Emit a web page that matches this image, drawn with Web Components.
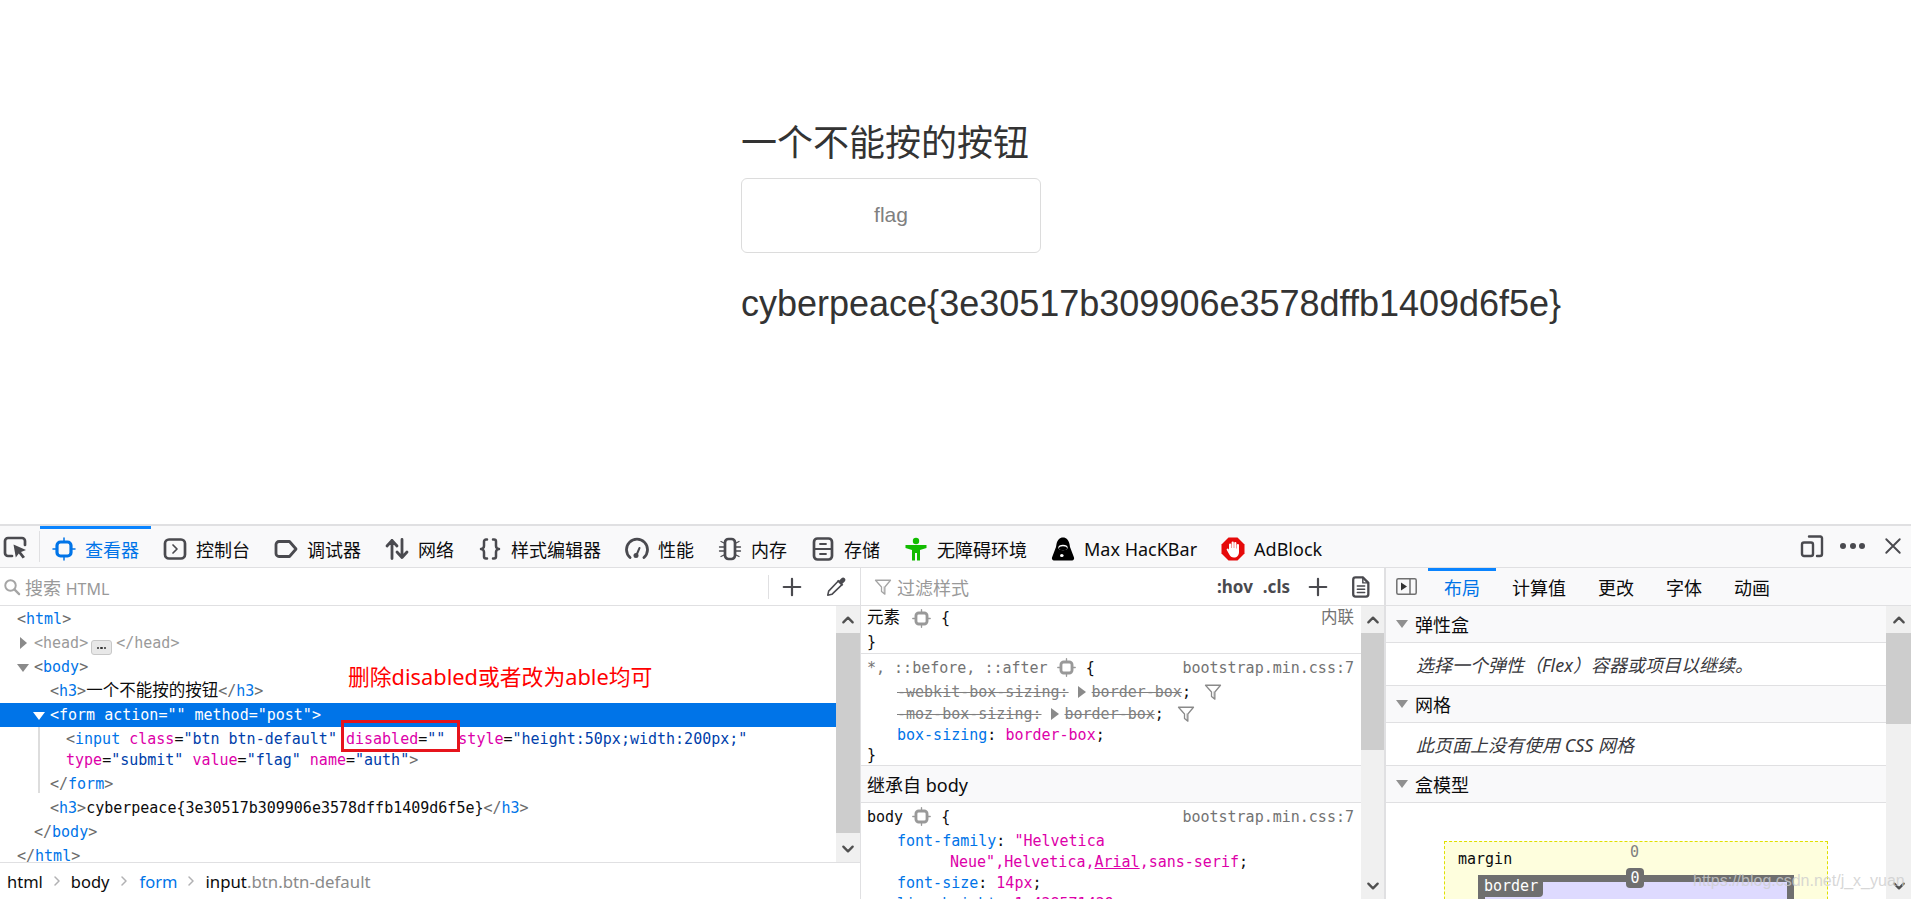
<!DOCTYPE html>
<html lang="zh">
<head>
<meta charset="utf-8">
<title>一个不能按的按钮</title>
<style>
  html, body { margin: 0; height: 100%; overflow: hidden; background: #fff; }
  body { font-family: "Noto Sans", "Noto Sans CJK SC", sans-serif; }
</style>
</head>
<body>
<app-root></app-root>

<script>
// shared icon strings, all on a 24 box and drawn with currentColor
const svg = (body, size = 24, extra = '') =>
  `<svg width="${size}" height="${size}" viewBox="0 0 24 24" fill="none" stroke="currentColor" stroke-linecap="round" stroke-linejoin="round" ${extra}>${body}</svg>`;

const ICONS = {
  pick: svg('<path stroke-width="2.7" d="M9 21H5a3 3 0 0 1-3-3V6a3 3 0 0 1 3-3h14a3 3 0 0 1 3 3v4"/><path fill="currentColor" stroke="none" d="M10.5 9.5 23 15l-5 2 4 5-2.4 1.6-3.8-5.2-3 4.2z"/>'),
  inspector: svg('<rect x="5" y="5" width="14" height="14" rx="3.5" stroke-width="3.2"/><path stroke-width="1.5" d="M12 1v3M12 20v3M1 12h3M20 12h3"/>'),
  console: svg('<rect x="2" y="2.5" width="20" height="19" rx="4" stroke-width="2.7"/><path stroke-width="1.7" d="m10 8 4 4-4 4"/>'),
  debugger: svg('<path stroke-width="2.8" d="M5 4.5h10.5L22 12l-6.5 7.5H5a3 3 0 0 1-3-3v-9a3 3 0 0 1 3-3z"/>'),
  network: svg('<path stroke-width="2.8" d="M7 21.5V3.5M2 9l5-5.5L12 9M17 2.5v18M12 15l5 5.5 5-5.5"/>'),
  style: svg('<path stroke-width="2.5" d="M9 2.5H8a2 2 0 0 0-2 2V9a3 3 0 0 1-3 3 3 3 0 0 1 3 3v4.500a2 2 0 0 0 2 2h1M15 2.5h1a2 2 0 0 1 2 2V9a3 3 0 0 0 3 3 3 3 0 0 0-3 3v4.500a2 2 0 0 1-2 2h-1"/>'),
  perf: svg('<path stroke-width="2.8" d="M5 20.5a10.5 10.5 0 1 1 14 0"/><circle cx="11" cy="18.5" r="2.5" fill="currentColor" stroke="none"/><path stroke-width="2" d="m11.5 18 3-7"/>'),
  memory: svg('<rect x="7" y="2" width="10" height="20" rx="3.5" stroke-width="2.7"/><path stroke-width="1.3" d="M6 6 3 4.500M6 10H1.500M6 14H1.500M6 18l-3 1.500M18 6l3-1.500M18 10h4.500M18 14h4.500M18 18l3 1.500"/>'),
  storage: svg('<rect x="3" y="1.5" width="18" height="21" rx="3.5" stroke-width="2.7"/><path stroke-width="1.8" d="M3 12h18M9 7h6M9 17h6"/>'),
  access: svg('<circle cx="12" cy="4" r="3.2" fill="#12bc00" stroke="none"/><path fill="#12bc00" stroke="none" d="M1.5 8h21v3l-6.500 2v10.500h-3V16h-2v7.500H8V13l-6.500-2z"/>'),
  hackbar: svg('<path fill="#000" stroke="none" d="M12 .5c3.500 0 5.500 2.500 6.500 6.500l.5 3 4 10.500c.5 1.500-.5 3-2 3H3c-1.500 0-2.500-1.500-2-3L5 10l.5-3C6.500 3 8.500.5 12 .5z"/><ellipse cx="12" cy="10.500" rx="4.600" ry="2.700" fill="#fff" stroke="none"/><ellipse cx="12" cy="11.300" rx="4" ry="2" fill="#000" stroke="none"/><ellipse cx="10.800" cy="18.500" rx="1.800" ry="1.500" fill="#fff" stroke="none"/>'),
  adblock: svg('<path fill="#e60a0a" stroke="none" d="M7.500.5h9l7 7v9l-7 7h-9l-7-7v-9z"/><path fill="#fff" stroke="none" d="M8 7.500a1.100 1.100 0 0 1 2.200 0V11h.4V5.500a1.100 1.100 0 0 1 2.200 0V11h.4V6a1.100 1.100 0 0 1 2.200 0v5.500h.4V8a1.100 1.100 0 0 1 2.200 0v7c0 3.500-2 5.500-5 5.500-2.500 0-3.700-1-4.700-3l-2.500-4.500c-.6-1.200 1.100-2.200 1.900-1L8 14z"/>'),
  device: svg('<path stroke-width="2.4" d="M9 2.500h11.500a2 2 0 0 1 1.500 1.500v16a2 2 0 0 1-2 2H17"/><rect x="2" y="8.500" width="11" height="13.500" rx="2" stroke-width="2.4"/>'),
  plus: svg('<path stroke-width="2.4" d="M12 3v18M3 12h18"/>', 22),
  dropper: svg('<path stroke-width="1.7" d="m14 6-10 10.500L3 21l4.500-1L18 10"/><path fill="currentColor" stroke="none" d="M13 5.500 14.500 4l1 1L18 2.500c1-1 2.500-1 3.500 0s1 2.500 0 3.500L19 8.500l1 1-1.500 1.500z"/>', 22),
  doc: svg('<path stroke-width="2.5" d="M6 1.500h8l6 6V20a2.500 2.500 0 0 1-2.500 2.500H6A2.500 2.500 0 0 1 3.500 20V4A2.500 2.500 0 0 1 6 1.500z"/><path stroke-width="1.6" d="M14 1.500V7.500h6M8 11h8M8 14.500h8M8 18h8"/>', 22),
  search: svg('<circle cx="10" cy="10" r="7" stroke-width="2.6"/><path stroke-width="3" d="m15.500 15.500 6 6"/>', 18),
  filter: svg('<path stroke-width="1.7" d="M2 3h20l-7.500 9v9.500L10 18v-6z"/><path fill="currentColor" fill-opacity=".35" stroke="none" d="M14.500 12v9.500L12 19v-8z"/>', 18),
  node: svg('<rect x="5" y="5" width="14" height="14" rx="3.5" stroke-width="3.6"/><path stroke-width="1.7" d="M12 1v3M12 20v3M1 12h3M20 12h3"/>', 19)
};

// page above the toolbox: the challenge page itself
class ChallengePage extends HTMLElement {
  constructor() {
    super();
    this.attachShadow({ mode: 'open' });
    this.shadowRoot.innerHTML = `
      <style>
        :host { display: block; flex: 1; padding: 124px 0 0 741px; color: #333;
          font-family: "Liberation Sans", "Noto Sans CJK SC", sans-serif; }
        h3 { margin: 0; font-size: 36px; font-weight: 400; line-height: 40px; }
        .btn { display: flex; align-items: center; justify-content: center; box-sizing: border-box;
          width: 300px; height: 75px; margin: 14px 0 31px; border: 1.5px solid #dcdcdc; border-radius: 6px;
          font-size: 21px; color: #808080; padding-bottom: 2px; }
      </style>
      <h3>一个不能按的按钮</h3>
      <div class="btn">flag</div>
      <h3>cyberpeace{3e30517b309906e3578dffb1409d6f5e}</h3>
    `;
  }
}

class ToolTab extends HTMLElement {
  constructor() {
    super();
    this.attachShadow({ mode: 'open' });
    this.shadowRoot.innerHTML = `
      <style>
        :host { display: flex; align-items: center; position: relative; height: 39px; margin-top: 3px;
          padding: 0 12px; color: #4a4a4f; }
        :host([selected]) { color: #0074e8; }
        :host([selected])::before { content: ""; position: absolute; left: 0; right: 0; top: -3px; height: 3px; background: #0a84ff; }
        .icon { display: flex; width: 24px; height: 24px; margin-right: 9px; }
        .label { font-size: 18px; color: #0c0c0d; white-space: nowrap; }
        :host([selected]) .label { color: #0074e8; }
      </style>
      <span class="icon"><slot></slot></span><span class="label"></span>
    `;
    this.shadowRoot.querySelector('.label').textContent = this.getAttribute('label');
  }
}

class ToolBar extends HTMLElement {
  constructor() {
    super();
    this.attachShadow({ mode: 'open' });
    const tabs = [
      ['inspector', '查看器'], ['console', '控制台'], ['debugger', '调试器'], ['network', '网络'],
      ['style', '样式编辑器'], ['perf', '性能'], ['memory', '内存'], ['storage', '存储'],
      ['access', '无障碍环境'], ['hackbar', 'Max HacKBar'], ['adblock', 'AdBlock']
    ];
    this.shadowRoot.innerHTML = `
      <style>
        :host { display: flex; align-items: flex-start; box-sizing: border-box; height: 44px; background: #f9f9fa;
          border-top: 2px solid #e0e0e2; border-bottom: 1.5px solid #e0e0e2; color: #4a4a4f; }
        .pick { display: flex; width: 40px; align-items: center; padding-left: 3px; box-sizing: border-box;
          border-right: 1px solid #e0e0e2; flex: none; height: 31px; margin-top: 5px; }
        .end { margin-left: auto; display: flex; align-items: center; height: 40px; }
        .end svg { display: block; }
        .dots { display: flex; gap: 3.5px; margin: 0 19px 0 16px; }
        .dots i { width: 6px; height: 6px; border-radius: 50%; background: #4a4a4f; }
        .end .x { margin-right: 9px; }
      </style>
      <div class="pick">${ICONS.pick}</div>
      ${tabs.map(([icon, label], i) => `<tool-tab label="${label}"${i === 0 ? ' selected' : ''}>${ICONS[icon]}</tool-tab>`).join('')}
      <div class="end">
        ${ICONS.device}
        <div class="dots"><i></i><i></i><i></i></div>
        <span class="x">${svg('<path stroke-width="2.5" d="m3 3 18 18M21 3 3 21"/>', 18)}</span>
      </div>
    `;
  }
}

class PanelScrollbar extends HTMLElement {
  constructor() {
    super();
    this.attachShadow({ mode: 'open' });
    this.shadowRoot.innerHTML = `
      <style>
        :host { display: flex; flex-direction: column; flex: none; background: #f0f0f0; color: #505050; }
        .btn { display: flex; align-items: center; justify-content: center; height: 27px; flex: none; }
        .track { flex: 1; position: relative; }
        .thumb { background: #cdcdcd; height: var(--thumb, 100px); }
      </style>
      <div class="btn">${svg('<path stroke-width="4" d="m4 16 8-8 8 8"/>', 14)}</div>
      <div class="track"><div class="thumb"></div></div>
      <div class="btn">${svg('<path stroke-width="4" d="m4 8 8 8 8-8"/>', 14)}</div>
    `;
  }
}

class FilterBar extends HTMLElement {
  constructor() {
    super();
    this.attachShadow({ mode: 'open' });
    this.shadowRoot.innerHTML = `
      <style>
        :host { display: flex; align-items: center; box-sizing: border-box; height: 38px; flex: none; background: #fff;
          border-bottom: 1.5px solid #e0e0e2; font-size: 18px; color: #4a4a4f; }
      </style>
      <slot></slot>
    `;
  }
}

// left column: html tree and breadcrumbs
class MarkupPanel extends HTMLElement {
  constructor() {
    super();
    this.attachShadow({ mode: 'open' });
    const b = '<b>&lt;</b>', e = '<b>&gt;</b>', c = '<b>&lt;/</b>';
    const chev = `<span class="c">${svg('<path stroke-width="3" d="m8 4 8 8-8 8"/>', 12)}</span>`;
    this.shadowRoot.innerHTML = `
      <style>
        :host { display: flex; flex-direction: column; box-sizing: border-box; width: 861px; flex: none; border-right: 1px solid #e0e0e2; }
        filter-bar span.t { color: #999; margin-left: 4px; }
        filter-bar span.t small { font-size: 16px; }
        .s { display: flex; margin-left: 3px; color: #a5a5a5; }
        .sep { width: 1px; height: 24px; background: #e0e0e2; margin-left: auto; }
        .tool { display: flex; color: #4a4a4f; }
        .main { flex: 1; display: flex; min-height: 0; }
        .tree { flex: 1; position: relative; overflow: hidden; padding-top: 1px;
          font: 15px/24px "DejaVu Sans Mono", "Noto Sans CJK SC", monospace; color: #0c0c0d; }
        .row { height: 24px; display: block; white-space: pre; }
        .row.wrap { height: 21px; line-height: 19px; }
        i { font-style: normal; color: #0074e8; }
        b { font-weight: 400; color: #6b6b6b; }
        u { text-decoration: none; color: #dd00a9; }
        em { font-style: normal; color: #003eaa; }
        .cjk { font-size: 16.5px; }
        .gap { margin-left: 4px; }
        .l1 { padding-left: 17px; } .l2 { padding-left: 34px; } .l3 { padding-left: 50px; } .l4 { padding-left: 66px; }
        .dim, .dim i, .dim b { color: #9a9a9a; }
        .sel { background: #0074e8; color: #fff; }
        .sel i, .sel b, .sel u, .sel em { color: #fff; }
        .tw { position: relative; }
        .tw::before { content: ""; position: absolute; border-style: solid; }
        .closed::before { left: 20px; top: 6px; border-width: 6px 0 6px 7px; border-color: transparent transparent transparent #8a8a8a; }
        .open::before { left: 17px; top: 9px; border-width: 8px 6px 0; border-color: #8a8a8a transparent transparent; }
        .sel.open::before { left: 33px; border-color: #fff transparent transparent; }
        .dots { display: inline-flex; align-items: center; justify-content: center; gap: 1px; width: 19px; height: 13px; margin: 0 4px 0 3px;
          vertical-align: -1px; background: #e8e8e8; border: 1px solid #c8c8c8; border-radius: 3px; }
        .dots s { width: 2.5px; height: 2.5px; background: #333; border-radius: 50%; }
        .guide { position: absolute; left: 38px; top: 121px; width: 2px; height: 66px; background: #ddd; }
        .note { position: absolute; left: 348px; top: 56px; font: 21.8px/30px "Noto Sans", "Noto Sans CJK SC", sans-serif; color: #f00; white-space: nowrap; }
        .mark { position: absolute; left: 341px; top: 114px; box-sizing: border-box; width: 119px; height: 32px; border: 3px solid #e6141c; }
        .crumbs { display: flex; align-items: center; height: 37px; flex: none; box-sizing: border-box; border-top: 1.5px solid #e0e0e2;
          padding-left: 7px; font-size: 16.5px; color: #0c0c0d; }
        .crumbs .c { color: #b1b1b3; margin: 0 8px; display: flex; }
        .crumbs .on { color: #0074e8; margin-left: 2px; }
        .crumbs .last { font-size: 16.8px; }
        .crumbs .mute { color: #8a8a8a; }
      </style>
      <filter-bar>
        <span class="s">${ICONS.search}</span><span class="t">搜索 <small>HTML</small></span>
        <span class="sep"></span>
        <span class="tool" style="margin-left:12px">${ICONS.plus}</span>
        <span class="tool" style="margin:0 13px 0 22px">${ICONS.dropper}</span>
      </filter-bar>
      <div class="main">
        <div class="tree">
          <span class="row l1">${b}<i>html</i>${e}</span>
          <span class="row l2 tw closed"><span class="dim">${b}<i>head</i>${e}</span><span class="dots"><s></s><s></s><s></s></span><span class="dim">${c}<i>head</i>${e}</span></span>
          <span class="row l2 tw open">${b}<i>body</i>${e}</span>
          <span class="row l3">${b}<i>h3</i>${e}<span class="cjk">一个不能按的按钮</span>${c}<i>h3</i>${e}</span>
          <span class="row l3 sel tw open">${b}<i>form</i> <i>action</i>=<em>""</em> <i>method</i>=<em>"post"</em>${e}</span>
          <span class="row l4">${b}<i>input</i> <u>class</u>=<em>"btn btn-default"</em> <u>disabled</u>=<em>""</em> <u class="gap">style</u>=<em>"height:50px;width:200px;"</em></span>
          <span class="row l4 wrap"><u>type</u>=<em>"submit"</em> <u>value</u>=<em>"flag"</em> <u>name</u>=<em>"auth"</em>${e}</span>
          <span class="row l3">${c}<i>form</i>${e}</span>
          <span class="row l3">${b}<i>h3</i>${e}cyberpeace{3e30517b309906e3578dffb1409d6f5e}${c}<i>h3</i>${e}</span>
          <span class="row l2">${c}<i>body</i>${e}</span>
          <span class="row l1">${c}<i>html</i>${e}</span>
          <span class="guide"></span>
          <span class="note">删除disabled或者改为able均可</span>
          <span class="mark"></span>
        </div>
        <panel-scrollbar style="width:24px;--thumb:200px"></panel-scrollbar>
      </div>
      <div class="crumbs">
        <span>html</span>${chev}<span>body</span>${chev}<span class="on">form</span>${chev}<span class="last">input<span class="mute">.btn.btn-default</span></span>
      </div>
    `;
  }
}

// middle column: css rules
class RulesPanel extends HTMLElement {
  constructor() {
    super();
    this.attachShadow({ mode: 'open' });
    const tri = '<span class="tri"></span>';
    const ft = `<span class="ft">${ICONS.filter}</span>`;
    const node = `<span class="node">${ICONS.node}</span>`;
    this.shadowRoot.innerHTML = `
      <style>
        :host { display: flex; flex-direction: column; box-sizing: border-box; width: 525px; flex: none; border-right: 2px solid #e0e0e2; }
        .t { color: #999; margin-left: 5px; }
        .fi { display: flex; margin-left: 13px; color: #a5a5a5; }
        .bar b { font-size: 17px; font-weight: 700; color: #4a4a4f; }
        .tool { display: flex; }
        .main { flex: 1; display: flex; min-height: 0; }
        .rules { flex: 1; min-width: 0; overflow: hidden; font: 15px/22px "DejaVu Sans Mono", "Noto Sans CJK SC", monospace; color: #0c0c0d; }
        .rule { box-sizing: border-box; border-bottom: 1.5px solid #e0e0e2; padding-left: 6px; }
        .line { display: flex; align-items: center; height: 21px; white-space: pre; }
        .line.a { height: 24px; }
        .line.i { padding-left: 30px; }
        .line.w { padding-left: 83px; }
        .src { margin-left: auto; padding-right: 7px; color: #737373; }
        .sel { color: #737373; }
        .cjk { font-size: 16.5px; }
        .node { display: flex; margin: 0 10px 0 9px; color: #999; }
        .p { color: #0074e8; } .v { color: #dd00a9; }
        .v u { text-decoration-thickness: 1px; }
        .over { color: #808080; text-decoration: line-through; display: flex; align-items: center; }
        .tri { width: 0; height: 0; margin: 0 6px 0 9px; border-style: solid; border-width: 6px 0 6px 8px; border-color: transparent transparent transparent #8a8a8a; }
        .ft { display: flex; margin-left: 13px; color: #8a8a8a; }
        .head { display: flex; align-items: center; height: 37px; box-sizing: border-box; padding-left: 6px; background: #f9f9fa; font: 18px "Noto Sans", "Noto Sans CJK SC", sans-serif;
          border-bottom: 1.5px solid #e0e0e2; }
      </style>
      <filter-bar class="bar">
        <span class="fi">${ICONS.filter}</span><span class="t">过滤样式</span>
        <b style="margin-left:auto">:hov</b><b style="margin-left:10px">.cls</b>
        <span class="tool" style="margin-left:17px">${ICONS.plus}</span>
        <span class="tool" style="margin:0 12px 0 21px">${ICONS.doc}</span>
      </filter-bar>
      <div class="main">
        <div class="rules">
          <div class="rule" style="height:48px">
            <div class="line a"><span class="cjk">元素</span><span class="node" style="margin-left:12px">${ICONS.node}</span>{<span class="src cjk">内联</span></div>
            <div class="line a">}</div>
          </div>
          <div class="rule" style="height:112px">
            <div class="line" style="height:27px"><span class="sel">*, ::before, ::after</span>${node}{<span class="src">bootstrap.min.css:7</span></div>
            <div class="line i" style="height:22px"><span class="over">-webkit-box-sizing:</span>${tri}<span class="over">border-box</span><span>;</span>${ft}</div>
            <div class="line i"><span class="over">-moz-box-sizing:</span>${tri}<span class="over">border-box</span><span>;</span>${ft}</div>
            <div class="line i"><span class="p">box-sizing</span>: <span class="v">border-box</span>;</div>
            <div class="line" style="height:20px">}</div>
          </div>
          <div class="head">继承自 body</div>
          <div class="rule" style="border:0">
            <div class="line" style="height:27px">body${node}{<span class="src">bootstrap.min.css:7</span></div>
            <div class="line i" style="height:22px"><span class="p">font-family</span>: <span class="v">"Helvetica</span></div>
            <div class="line w" style="height:20px"><span class="v">Neue",Helvetica,<u>Arial</u>,sans-serif</span>;</div>
            <div class="line i"><span class="p">font-size</span>: <span class="v">14px</span>;</div>
            <div class="line i"><span class="p">line-height</span>: <span class="v">1.428571429</span>;</div>
          </div>
        </div>
        <panel-scrollbar style="width:23px;--thumb:117px"></panel-scrollbar>
      </div>
    `;
  }
}

class SideTab extends HTMLElement {
  constructor() {
    super();
    this.attachShadow({ mode: 'open' });
    this.shadowRoot.innerHTML = `
      <style>
        :host { display: flex; align-items: center; height: 100%; padding: 0 16px; font-size: 18px; color: #0c0c0d; position: relative; }
        :host([selected]) { color: #0074e8; }
        :host([selected])::before { content: ""; position: absolute; left: 0; right: 0; top: 0; height: 3px; background: #0a84ff; }
      </style>
      <slot></slot>
    `;
  }
}

class FoldSection extends HTMLElement {
  constructor() {
    super();
    this.attachShadow({ mode: 'open' });
    this.shadowRoot.innerHTML = `
      <style>
        :host { display: block; }
        .h { display: flex; align-items: center; box-sizing: border-box; height: 37px; background: #f9f9fa; border-bottom: 1.5px solid #e0e0e2;
          padding-left: 10px; font-size: 18px; color: #0c0c0d; }
        .h::before { content: ""; width: 0; height: 0; margin-right: 7px; border-style: solid; border-width: 8px 6.5px 0; border-color: #909090 transparent transparent; }
      </style>
      <div class="h">${this.getAttribute('title')}</div>
      <slot></slot>
    `;
  }
}

class EmptyNote extends HTMLElement {
  constructor() {
    super();
    this.attachShadow({ mode: 'open' });
    this.shadowRoot.innerHTML = `
      <style>
        :host { display: flex; align-items: center; box-sizing: border-box; height: 43px; padding-left: 30px; font-size: 18px; font-style: italic;
          color: #38383d; border-bottom: 1.5px solid #e0e0e2; }
      </style>
      <slot></slot>
    `;
  }
}

class BoxModel extends HTMLElement {
  constructor() {
    super();
    this.attachShadow({ mode: 'open' });
    this.shadowRoot.innerHTML = `
      <style>
        :host { display: block; padding: 38px 58px 0; font: 15px/20px "DejaVu Sans Mono", monospace; }
        .margin { position: relative; box-sizing: border-box; height: 200px; padding: 33px 33px 0; background: #fefedd; border: 1.5px dashed #e0e000; }
        .border { position: relative; height: 200px; border: 7px solid #6f6f6f; background: #dedaff; }
        .lm { position: absolute; left: 13px; top: 7px; color: #0c0c0d; }
        .zero { position: absolute; left: 185px; top: 0; color: #808080; }
        .lb { position: absolute; left: -7px; top: -7px; padding: 1px 5px 1px 6px; background: #6f6f6f; color: #fff; border-radius: 0 0 4px 0; }
        .badge { position: absolute; left: 141px; top: -14px; width: 18px; height: 20px; line-height: 20px; text-align: center; background: #6f6f6f; color: #fff; border-radius: 4px; }
      </style>
      <div class="margin">
        <span class="lm">margin</span><span class="zero">0</span>
        <div class="border"><span class="lb">border</span><span class="badge">0</span></div>
      </div>
    `;
  }
}

// right column: layout sidebar
class LayoutPanel extends HTMLElement {
  constructor() {
    super();
    this.attachShadow({ mode: 'open' });
    this.shadowRoot.innerHTML = `
      <style>
        :host { display: flex; flex-direction: column; flex: 1; min-width: 0; }
        .tabs { display: flex; align-items: center; box-sizing: border-box; height: 38px; flex: none; background: #f9f9fa; border-bottom: 1.5px solid #e0e0e2; }
        .toggle { display: flex; width: 42px; justify-content: flex-start; padding-left: 10px; box-sizing: border-box; color: #4a4a4f; }
        .main { flex: 1; display: flex; min-height: 0; }
        .body { flex: 1; min-width: 0; overflow: hidden; }
      </style>
      <div class="tabs">
        <span class="toggle"><svg width="21" height="17" viewBox="0 0 21 17" fill="none" stroke="#707070" stroke-width="1.5"><rect x=".8" y=".8" width="19.4" height="15.4" rx="1.5"/><path d="M14 1v15"/><path fill="#333" stroke="none" d="m5 4.500 6 4-6 4z"/></svg></span>
        <side-tab selected>布局</side-tab><side-tab>计算值</side-tab><side-tab>更改</side-tab><side-tab>字体</side-tab><side-tab>动画</side-tab>
      </div>
      <div class="main">
        <div class="body">
          <fold-section title="弹性盒"><empty-note>选择一个弹性（Flex）容器或项目以继续。</empty-note></fold-section>
          <fold-section title="网格"><empty-note>此页面上没有使用 CSS 网格</empty-note></fold-section>
          <fold-section title="盒模型"><box-model></box-model></fold-section>
        </div>
        <panel-scrollbar style="width:25px;--thumb:91px"></panel-scrollbar>
      </div>
    `;
  }
}

class DevTools extends HTMLElement {
  constructor() {
    super();
    this.attachShadow({ mode: 'open' });
    this.shadowRoot.innerHTML = `
      <style>
        :host { display: flex; flex-direction: column; position: relative; height: 375px; flex: none; overflow: hidden; background: #fff; }
        .cols { flex: 1; display: flex; min-height: 0; }
        .mark { position: absolute; left: 1693px; top: 346px; font: 16px/22px "Liberation Sans", sans-serif;
          color: rgba(205, 205, 205, .8); white-space: nowrap; }
      </style>
      <tool-bar></tool-bar>
      <div class="cols">
        <markup-panel></markup-panel>
        <rules-panel></rules-panel>
        <layout-panel></layout-panel>
      </div>
      <span class="mark">https://blog.csdn.net/j_x_yuan</span>
    `;
  }
}

class AppRoot extends HTMLElement {
  constructor() {
    super();
    this.attachShadow({ mode: 'open' });
    this.shadowRoot.innerHTML = `
      <style>
        :host { display: flex; flex-direction: column; height: 100vh; overflow: hidden; }
      </style>
      <challenge-page></challenge-page>
      <dev-tools></dev-tools>
    `;
  }
}

customElements.define('tool-tab', ToolTab);
customElements.define('tool-bar', ToolBar);
customElements.define('panel-scrollbar', PanelScrollbar);
customElements.define('filter-bar', FilterBar);
customElements.define('markup-panel', MarkupPanel);
customElements.define('rules-panel', RulesPanel);
customElements.define('side-tab', SideTab);
customElements.define('fold-section', FoldSection);
customElements.define('empty-note', EmptyNote);
customElements.define('box-model', BoxModel);
customElements.define('layout-panel', LayoutPanel);
customElements.define('dev-tools', DevTools);
customElements.define('challenge-page', ChallengePage);
customElements.define('app-root', AppRoot);
</script>
</body>
</html>
